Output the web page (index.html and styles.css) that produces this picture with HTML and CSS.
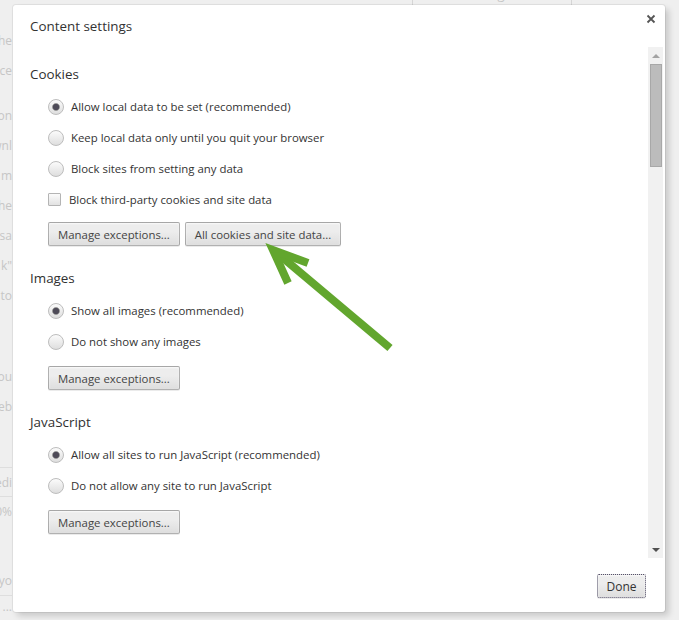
FILE: index.html
```html
<!DOCTYPE html>
<html lang="en">
<head>
    <meta charset="UTF-8">
    <meta name="viewport" content="width=device-width, initial-scale=1.0">
    <title>Settings - Content settings</title>
    <link rel="stylesheet" href="styles.css">
</head>
<body>
    <!-- settings page behind the overlay -->
    <div class="page">
        <div class="page-top">
            <div class="search">Search settings</div>
        </div>
        <div class="page-lines">
            <div class="line">the</div>
            <div class="line">device</div>
            <div class="line gap-sm">on</div>
            <div class="line">downl</div>
            <div class="line">m</div>
            <div class="line">the</div>
            <div class="line">usa</div>
            <div class="line">k"</div>
            <div class="line">to</div>
            <div class="line gap-lg">ou</div>
            <div class="line">web</div>
            <div class="line gap-md field">medi</div>
            <div class="line field">100%</div>
            <div class="line gap-yo">yo</div>
            <div class="line short">...</div>
        </div>
    </div>

    <div class="dialog">
        <div class="dialog-head">
            <h1 class="dialog-title">Content settings</h1>
            <button class="close" title="Close">
                <svg width="10" height="10" viewBox="0 0 10 10">
                    <path d="M1.5 1.5 L8.5 8.5 M8.5 1.5 L1.5 8.5" stroke="#555" stroke-width="1.8" fill="none"/>
                </svg>
            </button>
        </div>

        <div class="dialog-body">
            <div class="content">
                <div class="section">
                    <h2>Cookies</h2>
                    <label class="row"><input type="radio" name="cookies" checked> Allow local data to be set (recommended)</label>
                    <label class="row"><input type="radio" name="cookies"> Keep local data only until you quit your browser</label>
                    <label class="row"><input type="radio" name="cookies"> Block sites from setting any data</label>
                    <label class="row check"><input type="checkbox"> Block third-party cookies and site data</label>
                    <div class="buttons first">
                        <button class="btn">Manage exceptions...</button>
                        <button class="btn">All cookies and site data...</button>
                    </div>
                </div>

                <div class="section">
                    <h2>Images</h2>
                    <label class="row"><input type="radio" name="images" checked> Show all images (recommended)</label>
                    <label class="row"><input type="radio" name="images"> Do not show any images</label>
                    <div class="buttons">
                        <button class="btn">Manage exceptions...</button>
                    </div>
                </div>

                <div class="section">
                    <h2>JavaScript</h2>
                    <label class="row"><input type="radio" name="js" checked> Allow all sites to run JavaScript (recommended)</label>
                    <label class="row"><input type="radio" name="js"> Do not allow any site to run JavaScript</label>
                    <div class="buttons">
                        <button class="btn">Manage exceptions...</button>
                    </div>
                </div>
            </div>

            <div class="scrollbar">
                <div class="sb-up"></div>
                <div class="sb-thumb"></div>
                <div class="sb-track"></div>
                <div class="sb-down"></div>
            </div>
        </div>

        <div class="dialog-foot">
            <button class="btn done">Done</button>
        </div>
    </div>

    <!-- pointer to the site data button -->
    <svg class="arrow" width="679" height="620" viewBox="0 0 679 620">
        <path d="M390 348 L277 253" stroke="#62a62e" stroke-width="8" fill="none"/>
        <path d="M288 283 L273 250 L308 263" stroke="#62a62e" stroke-width="8" fill="none" stroke-linejoin="miter"/>
    </svg>
</body>
</html>
```

FILE: styles.css
```css
body {
    margin: 0;
    width: 679px;
    height: 620px;
    overflow: hidden;
    background-color: #efefef;
    font-family: "Open Sans", "Noto Sans", sans-serif;
}

/* faded page behind the dialog */
.page {
    color: #c6c6c6;
    font-size: 12px;
}

.page-top {
    height: 6px;
    overflow: hidden;
    padding-left: 412px;
}

.search {
    width: 160px;
    height: 22px;
    margin-top: -17px;
    padding-left: 6px;
    box-sizing: border-box;
    border-left: 1px solid #d6d6d6;
    border-right: 1px solid #d6d6d6;
    font-size: 13px;
    line-height: 22px;
}

.page-lines {
    width: 12px;
    padding-top: 19px;
}

.line {
    height: 30px;
    display: flex;
    justify-content: flex-end;
    align-items: center;
    overflow: hidden;
    white-space: nowrap;
}

.gap-sm { margin-top: 15px; }
.gap-lg { margin-top: 51px; }
.gap-md { margin-top: 46px; }
.gap-yo { margin-top: 40px; }

.line.field {
    border-top: 1px solid #dedede;
    height: 28px;
}

.line.short {
    height: 20px;
    border-top: 1px solid #dedede;
}

/* dialog */
.dialog {
    position: absolute;
    left: 13px;
    top: 5px;
    width: 652px;
    height: 607px;
    background-color: #fff;
    border-radius: 3px;
    box-shadow: 0 0 0 1px rgba(0, 0, 0, 0.06), 4px 4px 6px rgba(0, 0, 0, 0.16);
    display: flex;
    flex-direction: column;
    color: #333;
}

.dialog-head {
    height: 42px;
    display: flex;
    justify-content: space-between;
    align-items: center;
    padding-left: 17px;
    flex-shrink: 0;
}

.dialog-title {
    margin: 0;
    font-size: 13.4px;
    font-weight: normal;
    color: #333;
}

.close {
    align-self: flex-start;
    margin: 9px 9px 0 0;
    padding: 0;
    width: 10px;
    height: 10px;
    border: none;
    background: none;
    line-height: 0;
}

.dialog-body {
    flex: 1;
    display: flex;
    min-height: 0;
}

.content {
    flex: 1;
    padding: 17px 0 0 17px;
    overflow: hidden;
}

.section + .section {
    margin-top: 22px;
}

.section h2 {
    margin: 0 0 7px;
    font-size: 13.4px;
    font-weight: normal;
    line-height: 20px;
    color: #303030;
}

.row {
    height: 31px;
    margin-left: 18px;
    display: flex;
    align-items: center;
    gap: 7px;
    font-size: 11.4px;
    color: #333;
}

.row.check {
    gap: 8px;
}

.row input {
    margin: 0;
    -webkit-appearance: none;
    appearance: none;
    flex-shrink: 0;
}

.row input[type="radio"] {
    width: 16px;
    height: 16px;
    border-radius: 50%;
    border: 1px solid #bdbdbd;
    background: linear-gradient(#fbfbfb, #dedede);
    box-sizing: border-box;
}

.row input[type="radio"]:checked {
    background: radial-gradient(circle, #4e4b58 0 2.8px, #8f8f8f 3.4px, transparent 4.3px), linear-gradient(#fbfbfb, #dedede);
}

.row input[type="checkbox"] {
    width: 13px;
    height: 13px;
    border: 1px solid #b4b4b4;
    border-radius: 1px;
    background: linear-gradient(#fbfbfb, #e2e2e2);
    box-sizing: border-box;
}

.buttons {
    display: flex;
    gap: 5px;
    margin: 9px 0 0 18px;
}

.buttons.first {
    margin-top: 7px;
}

.btn {
    height: 24px;
    padding: 0 9px;
    font-family: inherit;
    font-size: 11.4px;
    color: #444;
    border: 1px solid rgba(0, 0, 0, 0.25);
    border-radius: 2px;
    background: linear-gradient(#ededed, #ededed 38%, #dedede);
    box-shadow: 0 1px 0 rgba(0, 0, 0, 0.08), inset 0 1px 2px rgba(255, 255, 255, 0.75);
}

/* scrollbar */
.scrollbar {
    width: 15px;
    margin-right: 2px;
    background-color: #f1f1f1;
    display: flex;
    flex-direction: column;
}

.sb-up,
.sb-down {
    height: 17px;
    display: flex;
    justify-content: center;
    align-items: center;
}

.sb-up::after {
    content: "";
    border: 4px solid transparent;
    border-bottom: 4px solid #a3a3a3;
    border-top: none;
}

.sb-down::after {
    content: "";
    border: 4px solid transparent;
    border-top: 4px solid #505050;
    border-bottom: none;
}

.sb-thumb {
    height: 103px;
    margin: 0 1px 0 2px;
    background-color: #bcbcbc;
    border: 1px solid #a8a8a8;
    box-sizing: border-box;
}

.sb-track {
    flex: 1;
}

.dialog-foot {
    height: 54px;
    flex-shrink: 0;
    display: flex;
    justify-content: flex-end;
    align-items: flex-start;
    padding: 16px 19px 0 0;
    box-sizing: border-box;
}

.done {
    width: 49px;
    padding: 0;
    border: 1px dotted #55506a;
    color: #333;
    font-size: 12px;
}

.arrow {
    position: absolute;
    left: 0;
    top: 0;
    pointer-events: none;
}
```
